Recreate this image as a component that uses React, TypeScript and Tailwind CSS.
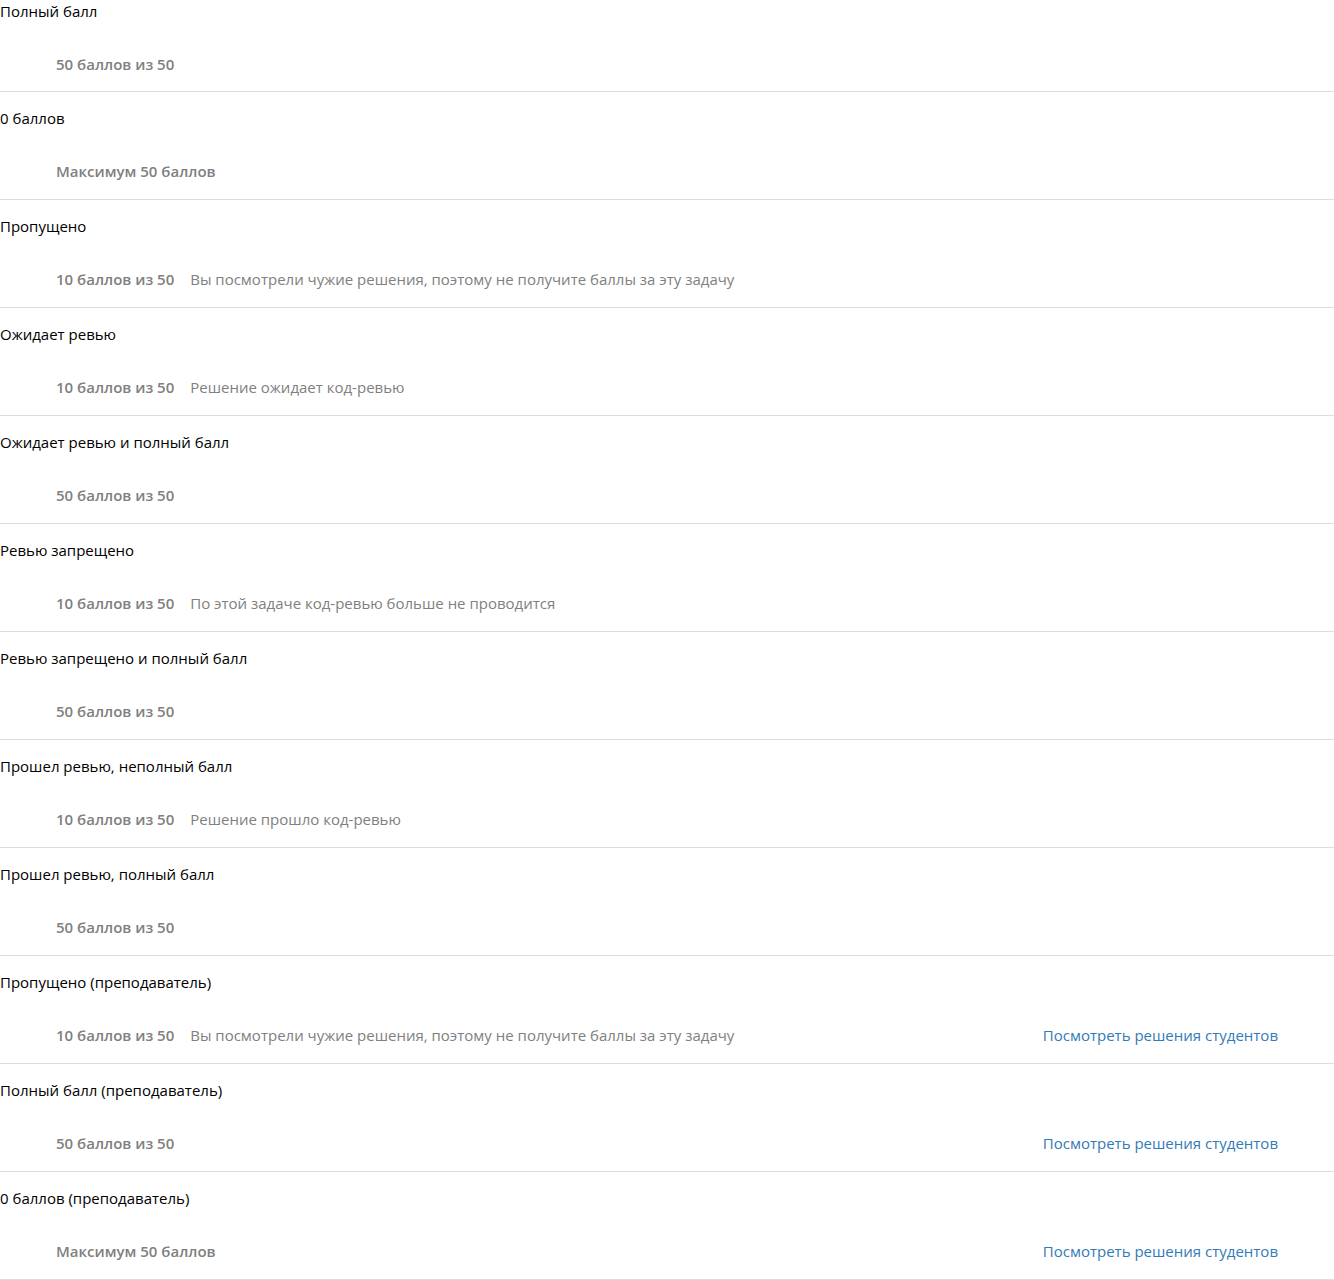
const rows: { title: string; score: string; note?: string; teacher?: boolean }[] = [
  { title: "Полный балл", score: "50 баллов из 50" },
  { title: "0 баллов", score: "Максимум 50 баллов" },
  {
    title: "Пропущено",
    score: "10 баллов из 50",
    note: "Вы посмотрели чужие решения, поэтому не получите баллы за эту задачу",
  },
  { title: "Ожидает ревью", score: "10 баллов из 50", note: "Решение ожидает код-ревью" },
  { title: "Ожидает ревью и полный балл", score: "50 баллов из 50" },
  {
    title: "Ревью запрещено",
    score: "10 баллов из 50",
    note: "По этой задаче код-ревью больше не проводится",
  },
  { title: "Ревью запрещено и полный балл", score: "50 баллов из 50" },
  { title: "Прошел ревью, неполный балл", score: "10 баллов из 50", note: "Решение прошло код-ревью" },
  { title: "Прошел ревью, полный балл", score: "50 баллов из 50" },
  {
    title: "Пропущено (преподаватель)",
    score: "10 баллов из 50",
    note: "Вы посмотрели чужие решения, поэтому не получите баллы за эту задачу",
    teacher: true,
  },
  { title: "Полный балл (преподаватель)", score: "50 баллов из 50", teacher: true },
  { title: "0 баллов (преподаватель)", score: "Максимум 50 баллов", teacher: true },
];

export default function App() {
  return (
    <div className="bg-white text-[15px] leading-5 text-black" style={{ fontFamily: '"Open Sans", sans-serif' }}>
      {rows.map((r, i) => (
        <div
          key={i}
          className={`border-b border-[#dddddd] ${i === 0 ? "pt-px pb-[17px]" : "pt-4 pb-[18px]"}`}
        >
          <div>{r.title}</div>
          <div className="mt-[33px] flex items-center pl-14 pr-14 text-[#808080]">
            <span className="font-semibold">{r.score}</span>
            {r.note && <span className="ml-4">{r.note}</span>}
            {r.teacher && (
              <a href="#" className="ml-auto text-[#337ab7]">
                Посмотреть решения студентов
              </a>
            )}
          </div>
        </div>
      ))}
    </div>
  );
}
